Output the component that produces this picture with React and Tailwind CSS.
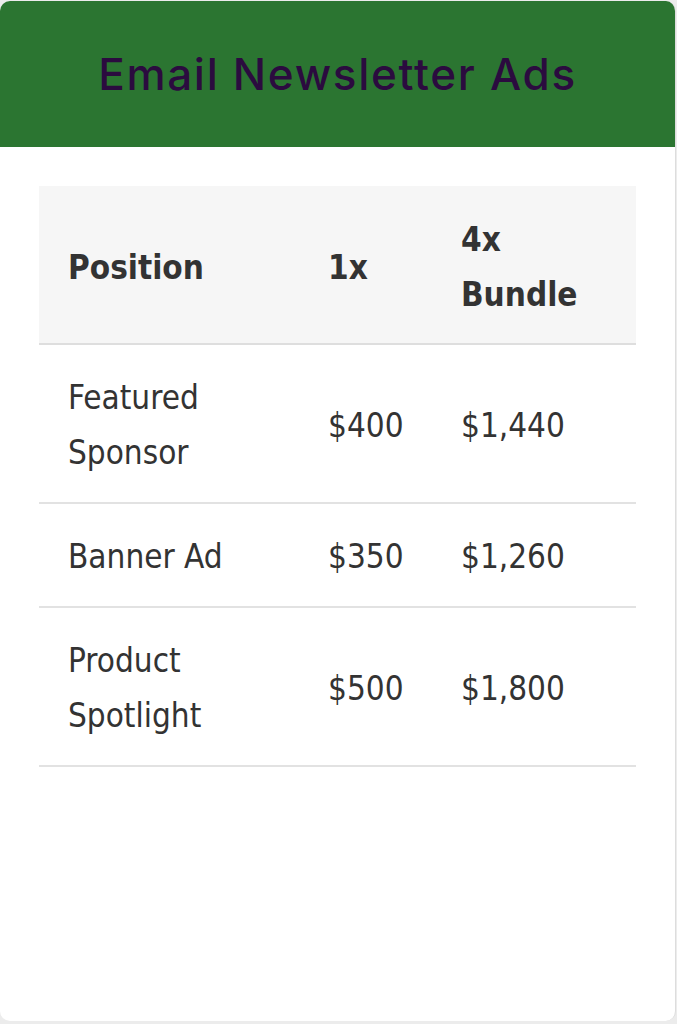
export default function App() {
  const rows = [
    { name: ["Featured", "Sponsor"], one: "$400", bundle: "$1,440" },
    { name: ["Banner Ad"], one: "$350", bundle: "$1,260" },
    { name: ["Product", "Spotlight"], one: "$500", bundle: "$1,800" },
  ];

  return (
    <div className="min-h-[1024px] bg-[#ececec] pt-px pb-[3px]">
      <div className="h-[1020px] w-[676px] overflow-hidden rounded-[10px] border-r border-[#dddddd] bg-white">
        {/* HEADER */}
        <div className="flex h-[146px] items-center justify-center bg-[#2b7531]">
          <h1 className="font-['Inter',sans-serif] text-[44px] font-medium tracking-[1.7px] text-[#2b0b3f]">
            Email Newsletter Ads
          </h1>
        </div>

        {/* TABLE */}
        <div className="px-[39px] pt-[39px]">
          <table className="w-[597px] table-fixed border-collapse font-['DejaVu_Sans_Condensed','DejaVu_Sans',sans-serif] text-[33px] leading-[55px] text-[#333333]">
            <colgroup>
              <col className="w-[260px]" />
              <col className="w-[133px]" />
              <col className="w-[204px]" />
            </colgroup>
            <thead>
              <tr className="border-b-2 border-[#dedede] bg-[#f6f6f6] text-left">
                <th className="pt-[26px] pb-[21px] pl-[29px] font-bold">Position</th>
                <th className="pt-[26px] pb-[21px] pl-[29px] font-bold">1x</th>
                <th className="pt-[26px] pb-[21px] pl-[29px] pr-[20px] font-bold">
                  4x Bundle
                </th>
              </tr>
            </thead>
            <tbody>
              {rows.map((row) => (
                <tr key={row.one} className="border-b-2 border-[#e2e2e2]">
                  <td className="pt-[25px] pb-[22px] pl-[29px]">
                    {row.name.map((line) => (
                      <div key={line}>{line}</div>
                    ))}
                  </td>
                  <td className="pt-[25px] pb-[22px] pl-[29px]">{row.one}</td>
                  <td className="pt-[25px] pb-[22px] pl-[29px]">{row.bundle}</td>
                </tr>
              ))}
            </tbody>
          </table>
        </div>
      </div>
    </div>
  );
}
